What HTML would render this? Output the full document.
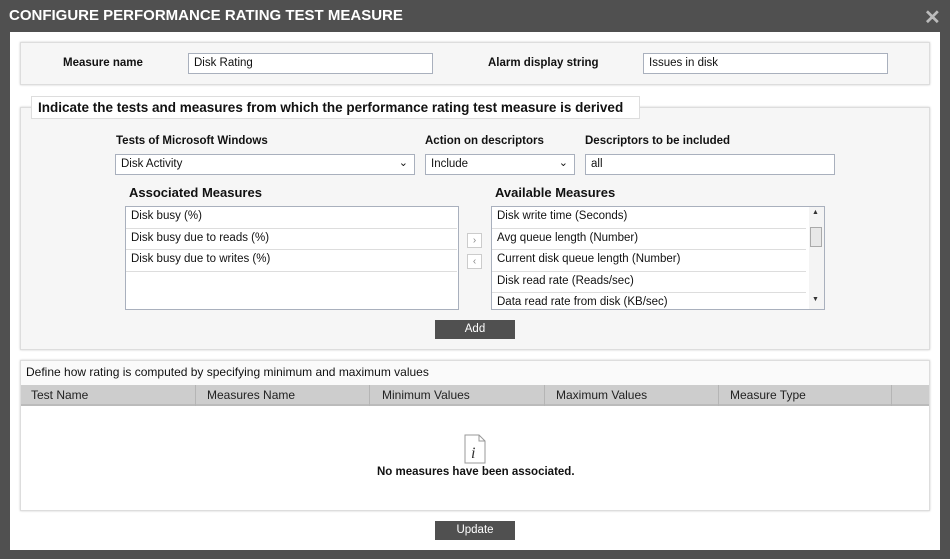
<!DOCTYPE html>
<html><head><style>
*{box-sizing:border-box;margin:0;padding:0}
body{width:950px;height:559px;background:#505050;font-family:"Liberation Sans",sans-serif;font-size:12px;color:#111;position:relative;overflow:hidden}
.a{position:absolute}
.title{left:9px;top:7px;color:#fff;font-size:15px;font-weight:bold}
.x{left:924px;top:5px;color:#bbb;font-size:20px;font-weight:bold}
.main{left:10px;top:32px;width:930px;height:518px;background:#fff}
.panel{background:#f6f6f6;border:1px solid #ddd;box-shadow:0 0 2px #ccc}
.inp{background:#fff;border:1px solid #a9b0bd;padding:3px 5px;font-size:11.5px;height:21px}
.b{font-weight:bold;font-size:11.5px}
.lst{background:#fff;border:1px solid #a9b0bd}
.lst div{height:21.5px;border-bottom:1px solid #ddd;padding:3px 5px;font-size:11.5px;margin-right:1px}
.btn{background:#505050;color:#fff;text-align:center;font-size:11.5px;padding-top:3px}
.arr{width:15px;height:15px;border:1px solid #ccc;background:#fff;color:#888;font-size:10px;text-align:center;line-height:13px}
.th{top:385px;height:21px;background:#cdcdcd;border-bottom:2px solid #bbb}
.th span{position:absolute;top:3px;font-size:12px;color:#222}
.sep{position:absolute;top:0;width:1px;height:21px;background:#b5b5b5}
</style></head><body>
<div class="a title">CONFIGURE PERFORMANCE RATING TEST MEASURE</div>
<div class="a x">✕</div>
<div class="a main"></div>

<div class="a panel" style="left:20px;top:42px;width:910px;height:43px"></div>
<div class="a b" style="left:63px;top:57px">Measure name</div>
<div class="a inp" style="left:188px;top:53px;width:245px">Disk Rating</div>
<div class="a b" style="left:488px;top:57px">Alarm display string</div>
<div class="a inp" style="left:643px;top:53px;width:245px">Issues in disk</div>

<div class="a panel" style="left:20px;top:107px;width:910px;height:243px"></div>
<div class="a" style="left:31px;top:96px;width:609px;height:23px;background:#fff;border:1px solid #ddd;font-size:13.5px;font-weight:bold;padding:3px 6px;color:#111">Indicate the tests and measures from which the performance rating test measure is derived</div>

<div class="a b" style="left:116px;top:135px">Tests of Microsoft Windows</div>
<div class="a inp" style="left:115px;top:154px;width:300px;background:#fff">Disk Activity<span style="position:absolute;right:6px;top:1px;font-size:11px">⌄</span></div>
<div class="a b" style="left:425px;top:135px">Action on descriptors</div>
<div class="a inp" style="left:425px;top:154px;width:150px">Include<span style="position:absolute;right:6px;top:1px;font-size:11px">⌄</span></div>
<div class="a b" style="left:585px;top:135px">Descriptors to be included</div>
<div class="a inp" style="left:585px;top:154px;width:250px">all</div>

<div class="a" style="left:129px;top:185px;font-size:13px;font-weight:bold">Associated Measures</div>
<div class="a lst" style="left:125px;top:206px;width:334px;height:104px">
<div>Disk busy (%)</div><div>Disk busy due to reads (%)</div><div>Disk busy due to writes (%)</div></div>
<div class="a arr" style="left:467px;top:233px">›</div>
<div class="a arr" style="left:467px;top:254px">‹</div>
<div class="a" style="left:495px;top:185px;font-size:13px;font-weight:bold">Available Measures</div>
<div class="a lst" style="left:491px;top:206px;width:334px;height:104px;overflow:hidden">
<div style="margin-right:18px">Disk write time (Seconds)</div><div style="margin-right:18px">Avg queue length (Number)</div><div style="margin-right:18px">Current disk queue length (Number)</div><div style="margin-right:18px">Disk read rate (Reads/sec)</div><div style="margin-right:18px">Data read rate from disk (KB/sec)</div></div>
<div class="a" style="left:809px;top:207px;width:15px;height:102px;background:#f4f4f4"></div>
<div class="a" style="left:810px;top:227px;width:12px;height:20px;background:#e8e8e8;border:1px solid #aaa"></div>
<div class="a" style="left:812px;top:209px;font-size:7px;color:#333">▲</div>
<div class="a" style="left:812px;top:296px;font-size:7px;color:#333">▼</div>
<div class="a btn" style="left:435px;top:320px;width:80px;height:19px">Add</div>

<div class="a panel" style="left:20px;top:360px;width:910px;height:151px;background:#fff"></div>
<div class="a" style="left:21px;top:361px;width:908px;height:24px;background:#fafafa"></div>
<div class="a" style="left:26px;top:365px;font-size:12px">Define how rating is computed by specifying minimum and maximum values</div>
<div class="a th" style="left:21px;width:908px">
<span style="left:10px">Test Name</span><span style="left:186px">Measures Name</span><span style="left:361px">Minimum Values</span><span style="left:535px">Maximum Values</span><span style="left:709px">Measure Type</span>
<div class="sep" style="left:174px"></div><div class="sep" style="left:348px"></div><div class="sep" style="left:523px"></div><div class="sep" style="left:697px"></div><div class="sep" style="left:870px"></div>
</div>
<svg class="a" style="left:462px;top:434px" width="26" height="30"><path d="M3 1H17L23 7V29H3Z" fill="#fff" stroke="#999"/><path d="M17 1V7H23" fill="none" stroke="#999"/><text x="9" y="24" font-family="Liberation Serif" font-style="italic" font-size="16" fill="#333">i</text></svg>
<div class="a" style="left:377px;top:466px;font-size:11.5px;font-weight:bold">No measures have been associated.</div>
<div class="a btn" style="left:435px;top:521px;width:80px;height:19px">Update</div>
</body></html>
